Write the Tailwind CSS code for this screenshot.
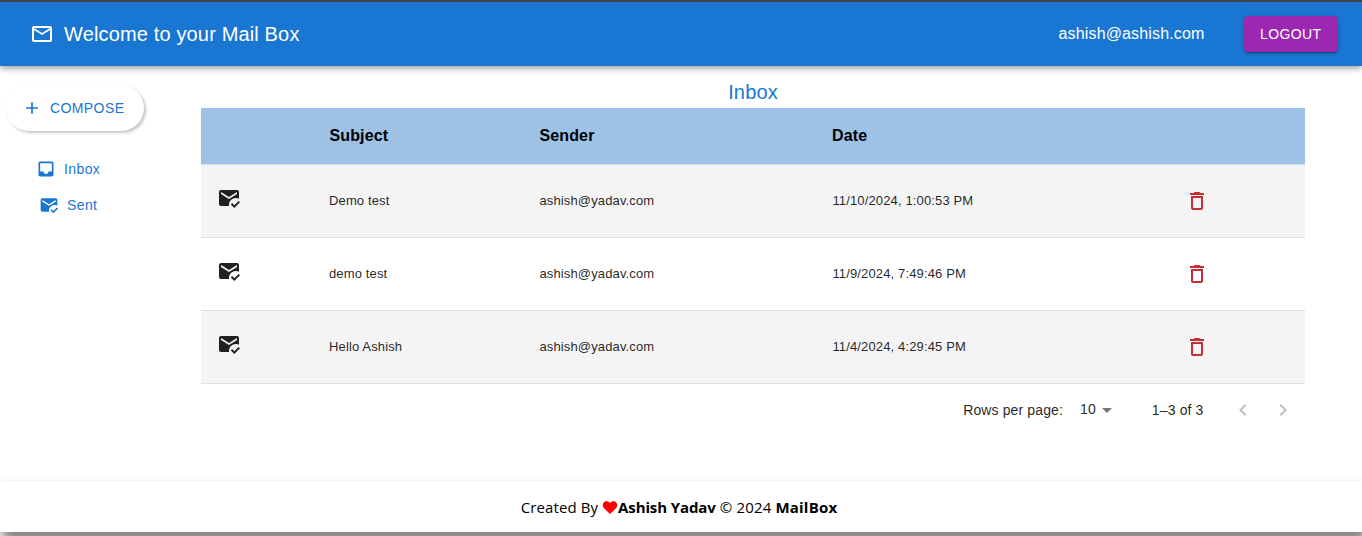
<!DOCTYPE html>
<html lang="en">
<head>
<meta charset="utf-8">
<title>MailBox</title>
<script src="https://cdn.jsdelivr.net/npm/@tailwindcss/browser@4"></script>
</head>
<body class="bg-white">
<svg class="hidden">
  <symbol id="mail-read" viewBox="0 0 24 24"><path d="M12 19c0-3.87 3.13-7 7-7 1.08 0 2.09.25 3 .68V6c0-1.1-.9-2-2-2H4c-1.1 0-2 .9-2 2v12c0 1.1.9 2 2 2h8.08c-.05-.33-.08-.66-.08-1zM4 6l8 5 8-5v2l-8 5-8-5V6zm13.34 16-3.54-3.54 1.41-1.41 2.12 2.12 4.24-4.24L23 16.34 17.34 22z"/></symbol>
  <symbol id="trash" viewBox="0 0 24 24"><path d="M6 19c0 1.1.9 2 2 2h8c1.1 0 2-.9 2-2V7H6v12zM8 9h8v10H8V9zm7.5-5-1-1h-5l-1 1H5v2h14V4h-3.5z"/></symbol>
</svg>
<div class="flex h-[536px] w-[1362px] flex-col overflow-hidden font-['Liberation_Sans',Arial,sans-serif] text-black/87">
  <header class="z-10 flex h-[66px] shrink-0 items-center border-t-2 border-[#424242] bg-[#1976d2] pr-6 pl-[30px] text-white shadow-[0_2px_4px_-1px_rgba(0,0,0,0.2),0_4px_5px_0_rgba(0,0,0,0.14),0_1px_10px_0_rgba(0,0,0,0.12)]">
    <svg class="size-6 fill-current" viewBox="0 0 24 24"><path d="M22 6c0-1.1-.9-2-2-2H4c-1.1 0-2 .9-2 2v12c0 1.1.9 2 2 2h16c1.1 0 2-.9 2-2V6zm-2 0-8 5-8-5h16zm0 12H4V8l8 5 8-5v10z"/></svg>
    <h1 class="ml-[10px] text-xl tracking-[0.15px]">Welcome to your Mail Box</h1>
    <span class="mr-[39px] ml-auto text-base tracking-[0.15px]">ashish@ashish.com</span>
    <button class="h-9 w-[94.5px] rounded bg-[#9c27b0] text-sm tracking-[0.4px] shadow-[0_3px_1px_-2px_rgba(0,0,0,0.2),0_2px_2px_0_rgba(0,0,0,0.14),0_1px_5px_0_rgba(0,0,0,0.12)]">LOGOUT</button>
  </header>
  <div class="flex h-[415px] shrink-0">
    <aside class="w-[201px] pt-[19px] pl-[6px] text-sm text-[#1976d2]">
      <button class="flex h-[46px] w-[138px] items-center rounded-full bg-white pl-4 tracking-[0.4px] shadow-[2px_2px_3px_rgba(0,0,0,0.22),0_0_3px_rgba(0,0,0,0.03)]">
        <svg class="mr-2 size-5 fill-current" viewBox="0 0 24 24"><path d="M19 13h-6v6h-2v-6H5v-2h6V5h2v6h6v2z"/></svg>COMPOSE
      </button>
      <nav class="mt-5 tracking-[0.4px]">
        <a class="flex h-9 items-center pl-[30px]"><svg class="mr-2 size-5 fill-current" viewBox="0 0 24 24"><path d="M19 3H4.99c-1.11 0-1.98.89-1.98 2L3 19c0 1.1.88 2 1.99 2H19c1.1 0 2-.9 2-2V5c0-1.11-.9-2-2-2zm0 12h-4c0 1.66-1.35 3-3 3s-3-1.34-3-3H4.99V5H19v10z"/></svg>Inbox</a>
        <a class="flex h-9 items-center pl-[33px]"><svg class="mr-2 size-5 fill-current"><use href="#mail-read"/></svg>Sent</a>
      </nav>
    </aside>
    <main class="w-[1104px] pt-[10px]">
      <h2 class="h-8 text-center text-xl leading-8 tracking-[0.15px] text-[#1976d2]">Inbox</h2>
      <table class="w-full table-fixed border-collapse text-left">
        <colgroup><col class="w-[112px]"><col class="w-[210px]"><col class="w-[293px]"><col class="w-[353px]"><col class="w-[136px]"></colgroup>
        <thead class="bg-[#9ec1e6] text-base tracking-[0.15px] text-black">
          <tr class="h-14 border-b border-[#e0e0e0]"><th></th><th class="pl-[16.4px]">Subject</th><th class="pl-[16.4px]">Sender</th><th class="pl-4">Date</th><th></th></tr>
        </thead>
        <tbody class="text-[13px] tracking-[0.14px]">
          <tr class="h-[73px] border-b border-[#e0e0e0] bg-[#f4f4f4]"><td class="pb-1.5 pl-4"><svg class="size-6 fill-current"><use href="#mail-read"/></svg></td><td class="pl-4">Demo test</td><td class="pl-[16.4px]">ashish@yadav.com</td><td class="pl-[16.4px]">11/10/2024, 1:00:53 PM</td><td class="pl-4"><svg class="size-6 fill-[#c62f2f]"><use href="#trash"/></svg></td></tr>
          <tr class="h-[73px] border-b border-[#e0e0e0]"><td class="pb-1.5 pl-4"><svg class="size-6 fill-current"><use href="#mail-read"/></svg></td><td class="pl-4">demo test</td><td class="pl-[16.4px]">ashish@yadav.com</td><td class="pl-[16.4px]">11/9/2024, 7:49:46 PM</td><td class="pl-4"><svg class="size-6 fill-[#c62f2f]"><use href="#trash"/></svg></td></tr>
          <tr class="h-[73px] border-b border-[#e0e0e0] bg-[#f4f4f4]"><td class="pb-1.5 pl-4"><svg class="size-6 fill-current"><use href="#mail-read"/></svg></td><td class="pl-4">Hello Ashish</td><td class="pl-[16.4px]">ashish@yadav.com</td><td class="pl-[16.4px]">11/4/2024, 4:29:45 PM</td><td class="pl-4"><svg class="size-6 fill-[#c62f2f]"><use href="#trash"/></svg></td></tr>
        </tbody>
      </table>
      <div class="flex h-[52px] items-center justify-end pr-[10px] text-sm tracking-[0.13px]">
        <span>Rows per page:</span>
        <span class="ml-[17px] pb-0.5">10</span>
        <svg class="-ml-px size-6 fill-black/54" viewBox="0 0 24 24"><path d="m7 10 5 5 5-5z"/></svg>
        <span class="mr-[27.5px] ml-[33px]">1–3 of 3</span>
        <svg class="mr-4 size-6 fill-black/26" viewBox="0 0 24 24"><path d="M15.41 7.41 14 6l-6 6 6 6 1.41-1.41L10.83 12z"/></svg>
        <svg class="size-6 fill-black/26" viewBox="0 0 24 24"><path d="M10 6 8.59 7.41 13.17 12l-4.58 4.59L10 18l6-6z"/></svg>
      </div>
    </main>
  </div>
  <footer class="flex h-[51px] shrink-0 items-center justify-center bg-white pt-0.5 pr-1 font-['Open_Sans','Noto_Sans',sans-serif] text-[15px] text-black shadow-[5px_10px_10px_rgba(0,0,0,0.36),0_8px_10px_1px_rgba(0,0,0,0.14),0_3px_10px_1px_rgba(0,0,0,0.08)]">
    <span class="tracking-[0.1px] whitespace-pre">Created By </span>
    <svg class="h-[13px] w-4 fill-[#ff0000]" viewBox="0 0 16 13"><path d="M8 13 1.8 7.1C.5 5.8.4 3.2 1.6 1.7 3.2-.4 6.3-.2 8 2c1.7-2.2 4.8-2.4 6.4-.3 1.2 1.5 1.1 4.1-.2 5.4z"/></svg>
    <b class="tracking-[-0.12px]">Ashish Yadav</b><span class="tracking-[0.17px] whitespace-pre"> © 2024 </span><b class="tracking-[0.2px]">MailBox</b>
  </footer>
</div>
</body>
</html>
